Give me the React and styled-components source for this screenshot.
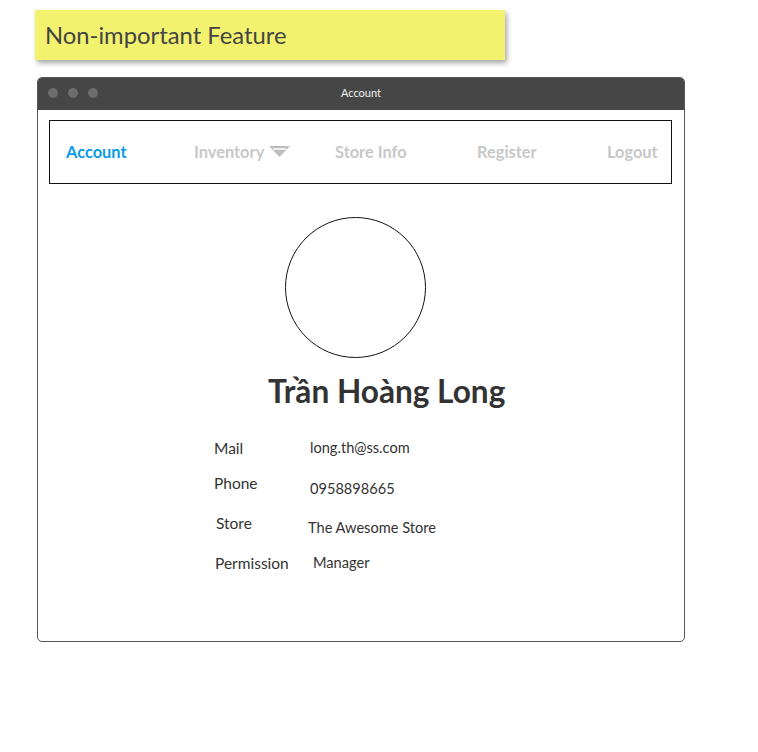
import React from "react";
import styled, { createGlobalStyle } from "styled-components";

const Global = createGlobalStyle`
  html, body { margin: 0; padding: 0; background: #ffffff; }
  body { font-family: Lato, "Noto Sans", sans-serif; color: #333; }
`;

const Page = styled.div`
  width: 758px;
  height: 752px;
  padding: 10px 0 0 35px;
  box-sizing: border-box;
  display: flex;
  flex-direction: column;
`;

const Sticky = styled.div`
  width: 470px;
  height: 50px;
  background: #f2f26e;
  box-shadow: 2px 3px 5px rgba(0, 0, 0, 0.35);
  display: flex;
  align-items: center;
  padding-left: 10px;
  box-sizing: border-box;
  font-size: 23.8px;
  color: #444;
`;

const Window = styled.div`
  margin: 17px 0 0 2px;
  width: 648px;
  height: 565px;
  border: 1px solid #555;
  border-radius: 5px;
  box-sizing: border-box;
  overflow: hidden;
  display: flex;
  flex-direction: column;
`;

const TitleBar = styled.div`
  height: 32px;
  flex: none;
  background: #464646;
  position: relative;
  display: flex;
  align-items: center;
  justify-content: center;
  padding-bottom: 3px;
  box-sizing: border-box;
  color: #f2f2f2;
  font-size: 11px;
`;

const Dots = styled.div`
  position: absolute;
  left: 10px;
  top: 10px;
  display: flex;
  gap: 10px;
`;

const Dot = styled.span`
  width: 10px;
  height: 10px;
  border-radius: 50%;
  background: #6d6d6d;
`;

const Body = styled.div`
  padding: 10px 12px 0 11px;
  display: flex;
  flex-direction: column;
`;

const Nav = styled.nav`
  height: 64px;
  border: 1px solid #111;
  box-sizing: border-box;
  display: grid;
  grid-template-columns: 128px 141px 142px 130px auto;
  align-items: center;
  padding-left: 16px;
  padding-bottom: 2px;
`;

const NavItem = styled.div`
  font-size: 16.4px;
  font-weight: 700;
  color: ${(p) => (p.$active ? "#099ce6" : "#c8c8c8")};
  display: flex;
  align-items: center;
  gap: 5px;
`;

const Profile = styled.div`
  display: flex;
  flex-direction: column;
  align-items: flex-start;
  margin-top: 33px;
`;

const Avatar = styled.div`
  width: 139px;
  height: 139px;
  border: 1px solid #111;
  border-radius: 50%;
  margin-left: 236px;
`;

const Name = styled.h1`
  margin: 14px 0 0 219px;
  font-size: 31.6px;
  font-weight: 700;
  color: #333;
  line-height: 38px;
`;

const Details = styled.div`
  margin: 28px 0 0 165px;
  display: flex;
  flex-direction: column;
`;

const Row = styled.div`
  height: ${(p) => p.$h}px;
  display: grid;
  grid-template-columns: 96px auto;
  align-items: start;
`;

const Label = styled.span`
  font-size: 15.5px;
  color: #333;
  margin-left: ${(p) => p.$dx || 0}px;
  margin-top: ${(p) => p.$dy || 0}px;
`;

const Value = styled.span`
  font-size: 14.6px;
  color: #333;
  margin-left: ${(p) => p.$dx || 0}px;
  margin-top: ${(p) => p.$dy || 0}px;
`;

const Arrow = () => (
  <svg width="21" height="11" viewBox="0 0 21 11">
    <polygon points="0,0 21,0 10.5,11" fill="#bdbdbd" />
    <line x1="4" y1="3" x2="17" y2="3" stroke="#fff" strokeWidth="1.5" />
  </svg>
);

const rows = [
  { label: "Mail", value: "long.th@ss.com", h: 36, ly: 1, vy: 1, lx: 0, vx: 0 },
  { label: "Phone", value: "0958898665", h: 40, ly: 0, vy: 6, lx: 0, vx: 0 },
  { label: "Store", value: "The Awesome Store", h: 39, ly: 0, vy: 5, lx: 2, vx: -2 },
  { label: "Permission", value: "Manager", h: 36, ly: 1, vy: 1, lx: 1, vx: 3 },
];

export default function App() {
  return (
    <>
      <Global />
      <Page>
        <Sticky>Non-important Feature</Sticky>
        <Window>
          <TitleBar>
            <Dots>
              <Dot />
              <Dot />
              <Dot />
            </Dots>
            Account
          </TitleBar>
          <Body>
            <Nav>
              <NavItem $active>Account</NavItem>
              <NavItem>
                Inventory <Arrow />
              </NavItem>
              <NavItem>Store Info</NavItem>
              <NavItem>Register</NavItem>
              <NavItem>Logout</NavItem>
            </Nav>
            <Profile>
              <Avatar />
              <Name>Trần Hoàng Long</Name>
              <Details>
                {rows.map((r) => (
                  <Row key={r.label} $h={r.h}>
                    <Label $dx={r.lx} $dy={r.ly}>{r.label}</Label>
                    <Value $dx={r.vx} $dy={r.vy}>{r.value}</Value>
                  </Row>
                ))}
              </Details>
            </Profile>
          </Body>
        </Window>
      </Page>
    </>
  );
}
